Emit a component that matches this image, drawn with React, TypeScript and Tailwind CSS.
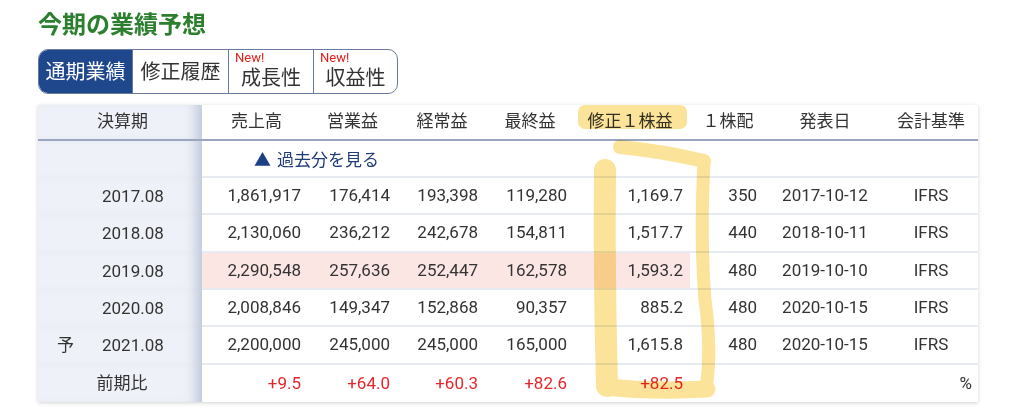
import React from "react";

const COLS =
  "grid grid-cols-[164px_109px_83px_96px_80px_120px_76px_118px_94px]";

type Row = {
  yo?: boolean;
  period: string;
  vals: string[];
  pink?: boolean;
  h: string;
};

const rows: Row[] = [
  { period: "2017.08", vals: ["1,861,917", "176,414", "193,398", "119,280", "1,169.7", "350", "2017-10-12", "IFRS"], h: "h-[37px]" },
  { period: "2018.08", vals: ["2,130,060", "236,212", "242,678", "154,811", "1,517.7", "440", "2018-10-11", "IFRS"], h: "h-[38px]" },
  { period: "2019.08", vals: ["2,290,548", "257,636", "252,447", "162,578", "1,593.2", "480", "2019-10-10", "IFRS"], pink: true, h: "h-[37px]" },
  { period: "2020.08", vals: ["2,008,846", "149,347", "152,868", "90,357", "885.2", "480", "2020-10-15", "IFRS"], h: "h-[37px]" },
  { yo: true, period: "2021.08", vals: ["2,200,000", "245,000", "245,000", "165,000", "1,615.8", "480", "2020-10-15", "IFRS"], h: "h-[38px]" },
];

const valAlign = [
  "justify-end pr-[10px]",
  "justify-end pr-[4px]",
  "justify-end pr-[12px]",
  "justify-end pr-[3px]",
  "justify-end pr-[7px]",
  "justify-end pr-[9px]",
  "justify-center",
  "justify-center",
];

const headers = ["売上高", "営業益", "経常益", "最終益", "修正１株益", "１株配", "発表日", "会計基準"];

const leftCell =
  "bg-[#eef1f7] shadow-[inset_-14px_0_12px_-8px_rgba(120,140,180,0.4)] flex items-center";

export default function App() {
  return (
    <div className="relative w-[1024px] h-[417px] overflow-hidden bg-white font-[Roboto,'Noto_Sans_CJK_JP',sans-serif] text-[#333]">
      <div className="pl-[38px] pt-[7px]">
        <h1 className="text-[24px] leading-[32px] font-bold text-[#2b7f2e] font-['Noto_Sans_CJK_JP',sans-serif]">
          今期の業績予想
        </h1>
        <div className="mt-[10px] flex h-[45px] w-[360px] rounded-[10px] border-[1.5px] border-[#6b78a0] overflow-hidden">
          <div className="w-[93px] bg-[#1e478c] text-white text-[20px] flex items-center justify-center">
            通期業績
          </div>
          <div className="w-[96px] border-l-[1.5px] border-[#6b78a0] text-[20px] flex items-center justify-center">
            修正履歴
          </div>
          <div className="w-[85px] border-l-[1.5px] border-[#6b78a0] flex flex-col">
            <span className="pl-[6px] pt-[2px] text-[13px] leading-[12px] text-[#e3201b]">New!</span>
            <span className="mt-[3px] text-[20px] leading-[22px] text-center">成長性</span>
          </div>
          <div className="flex-1 border-l-[1.5px] border-[#6b78a0] flex flex-col">
            <span className="pl-[6px] pt-[2px] text-[13px] leading-[12px] text-[#e3201b]">New!</span>
            <span className="mt-[3px] text-[20px] leading-[22px] text-center">収益性</span>
          </div>
        </div>

        <div className="mt-[11px] w-[940px] bg-white shadow-[0_1px_4px_rgba(0,0,0,0.18)] text-[17px]">
          <div className={`${COLS} h-[36px]`}>
            <div className={`${leftCell} justify-center pl-[5px] border-b-2 border-[#9aa5c0]`}>決算期</div>
            {headers.map((h) => (
              <div key={h} className="flex items-center justify-center border-b-2 border-[#9aa5c0]">
                {h}
              </div>
            ))}
          </div>
          <div className={`${COLS} h-[37px]`}>
            <div className={leftCell}></div>
            <div className="col-span-8 flex items-center pl-[52px] border-b-2 border-[#e8ebf1] text-[#1f3c78] font-['Noto_Sans_CJK_JP',sans-serif]">
              <span className="text-[#1c3f86] mr-[6px]">▲</span>過去分を見る
            </div>
          </div>
          {rows.map((r) => (
            <div key={r.period} className={`${COLS} ${r.h}`}>
              <div className={`${leftCell} pl-[19px]`}>
                <span className="w-[45px]">{r.yo ? "予" : ""}</span>
                <span>{r.period}</span>
              </div>
              {r.vals.map((v, i) => (
                <div
                  key={i}
                  className={`flex items-center border-b-2 border-[#e8ebf1] ${valAlign[i]} ${
                    r.pink && i < 5 ? "bg-[#fce6e3]" : ""
                  }`}
                >
                  {v}
                </div>
              ))}
            </div>
          ))}
          <div className={`${COLS} h-[37px]`}>
            <div className={`${leftCell} justify-center pl-[4px]`}>前期比</div>
            {["+9.5", "+64.0", "+60.3", "+82.6", "+82.5"].map((v, i) => (
              <div key={i} className={`flex items-center text-[#e8262a] ${valAlign[i]}`}>
                {v}
              </div>
            ))}
            <div></div>
            <div className="col-span-2 flex items-center justify-end pr-[6px]">%</div>
          </div>
        </div>
      </div>

      <svg
        className="absolute inset-0 pointer-events-none mix-blend-multiply"
        width="1024"
        height="417"
        viewBox="0 0 1024 417"
      >
        <g fill="none" stroke="#fbe39a" strokeLinecap="round" strokeLinejoin="round">
          <rect x="578" y="105" width="109" height="24" rx="7" fill="#fbe39a" stroke="none" />
          <path d="M620 147 Q 662 151 704 161" strokeWidth="14" />
          <path d="M605 170 Q 604 280 607 386" strokeWidth="22" />
          <path d="M704 162 Q 700 240 705 300 Q 712 350 706 390" strokeWidth="13" />
          <path d="M606 387 Q 655 392 707 389" strokeWidth="17" />
        </g>
      </svg>
    </div>
  );
}
